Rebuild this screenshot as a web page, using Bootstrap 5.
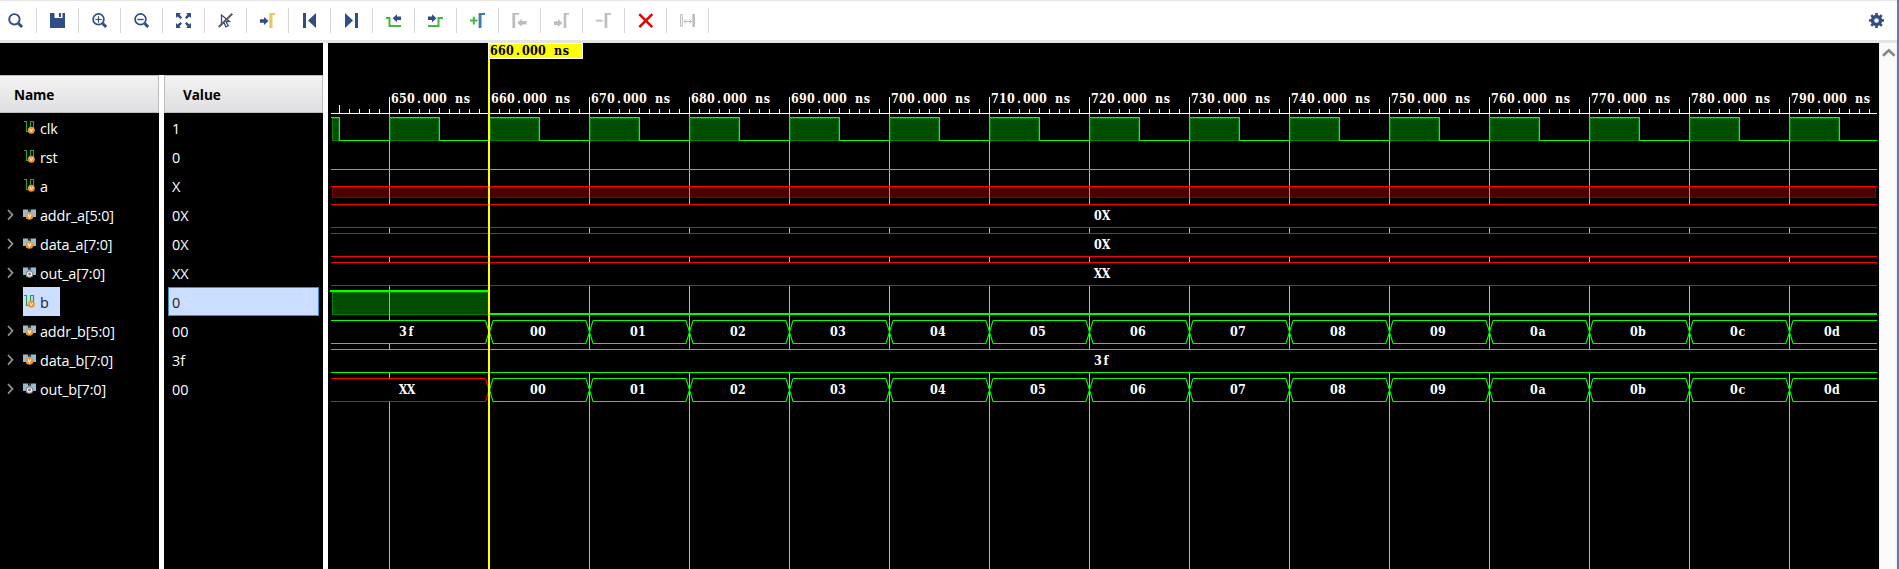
<!DOCTYPE html>
<html lang="en">
<head>
<meta charset="utf-8">
<meta name="viewport" content="width=device-width, initial-scale=1">
<title>Waveform viewer</title>
<link href="https://cdn.jsdelivr.net/npm/bootstrap@5.3.0/dist/css/bootstrap.min.css" rel="stylesheet">
<style>
  body { font-family: "Open Sans", "Noto Sans", sans-serif; font-size: 14.4px; line-height: 1; }
  .viewer { height: 569px; border-right: 2px solid #4a7fcb; }
  .toolbar { height: 43px; border-top: 1px solid #e5e5e5; border-bottom: 3px solid #e5e5e5; padding-top: 7px; }
  .tool { width: 42px; height: 25px; padding: 5px 0 4px 13px; border: 0; border-right: 1px solid #d6d6d6; background: none; }
  .tool:first-child { width: 37px; padding-left: 8px; }
  .tool svg, .gear svg { display: block; width: 16px; height: 16px; }
  .gear { border: 0; background: none; padding: 5px 12px 4px 0; height: 25px; }
  .side { width: 323px; padding-top: 32px; }
  .pane { width: 159px; background: #000; }
  .pane-head { height: 38px; border: 1px solid #bcbcbc; border-left: 0; background: linear-gradient(#f3f3f3, #dfdfe2); font: bold 13.6px/38px "Open Sans", sans-serif; color: #000; padding-left: 14px; }
  .pane-head span { display: inline-block; letter-spacing: -.1px; }
  .pane-value .pane-head { border-left: 1px solid #bcbcbc; padding-left: 18px; }
  .sig { height: 29px; color: #fff; padding-left: 6px; }
  .sig .chev { width: 17px; height: 29px; }
  .tag { height: 29px; padding-right: 10px; }
  .tag svg { width: 17px; height: 29px; }
  .tag.picked { background: #cbdeff; color: #222; padding-right: 11px; }
  .val { height: 29px; line-height: 31px; color: #fff; margin: 0 4px; padding-left: 4px; }
  .val.picked { background: #cbdeff; color: #222; border: 1px solid #3d8fd1; line-height: 29px; padding-left: 3px; }
  .tag span { line-height: 31px; letter-spacing: -.14px; white-space: nowrap; }
  .gutter { width: 5px; }
  .wave { width: 1551px; }
  .scroll { width: 18px; background: #fafafa; border-left: 1px solid #f0f0f0; border-right: 1px solid #f0f0f0; }
  .wave text { font-family: "DejaVu Serif Condensed", "DejaVu Serif", serif; font-stretch: semi-condensed; font-weight: bold; font-size: 12.4px; text-anchor: middle; }
</style>
</head>
<body class="bg-white overflow-hidden">
<svg class="d-none">
  <defs>
    <symbol id="wire" viewBox="0 0 17 29">
      <path d="M1 8.5h2.5v10H6M7.5 18V8.5h3V15" fill="none" stroke="#2f9a48" stroke-width="1.2"/>
      <circle cx="8.3" cy="17.3" r="3.5" fill="#f0922b"/><path d="M6.9 15.8l1.4 3 1.4-3" fill="none" stroke="#fff" stroke-width="1"/>
    </symbol>
    <symbol id="bus" viewBox="0 0 17 29">
      <path d="M0 9.500h5v2h3v-2h5v7.500H8v1.500H3V17H0z" fill="#94bdd3"/><path d="M5 9.500l3 3V9.500z" fill="#31536a"/>
      <circle cx="6.500" cy="16" r="3.800" fill="#f0922b"/><path d="M5 14.300l1.500 3.200L8 14.300" fill="none" stroke="#fff" stroke-width="1.100"/>
    </symbol>
    <symbol id="reg" viewBox="0 0 17 29">
      <path d="M0 9.500h5v2h3v-2h5v7.500H8v1.500H3V17H0z" fill="#94bdd3"/><path d="M5 9.500l3 3V9.500z" fill="#31536a"/>
      <circle cx="6.500" cy="16" r="3.800" fill="#8a8a8a"/><circle cx="6.500" cy="16" r="2" fill="#777" stroke="#fff" stroke-width="1.100"/>
    </symbol>
  </defs>
</svg>
<div class="viewer d-flex flex-column">
  <header class="toolbar d-flex align-items-start">
    <button class="tool" aria-label="Search"><svg viewBox="0 0 16 16" fill="none" stroke="#2f4d86"><circle cx="6.400" cy="6.300" r="5.200" stroke-width="1.900"/><path d="M10.500 10.500l3.600 3.500" stroke-width="2.900"/></svg></button>
    <button class="tool" aria-label="Save"><svg viewBox="0 0 16 16"><path d="M0 0h4.500v5h8V0H15v15H0z M9 0h2v4H9z" fill="#2f4d86"/></svg></button>
    <button class="tool" aria-label="Zoom in"><svg viewBox="0 0 16 16" fill="none" stroke="#2f4d86"><circle cx="6.500" cy="6.300" r="5.400" stroke-width="1.700"/><path d="M10.800 10.600l3.400 3.400" stroke-width="2.900"/><path d="M3.300 6.500h6.400M6.500 3.300v6.400" stroke-width="1.200"/></svg></button>
    <button class="tool" aria-label="Zoom out"><svg viewBox="0 0 16 16" fill="none" stroke="#2f4d86"><circle cx="6.500" cy="6.300" r="5.400" stroke-width="1.700"/><path d="M10.800 10.600l3.400 3.400" stroke-width="2.900"/><path d="M3.300 6.500h6.400" stroke-width="1.400"/></svg></button>
    <button class="tool" aria-label="Zoom fit"><svg viewBox="0 0 16 16"><path d="M0 0h5L3.500 1.500 6 4.500 4.500 6 1.500 3.500 0 5zM15 0v5l-1.500-1.500L10.500 6 9 4.500l2.500-3L10 0zM0 15v-5l1.500 1.500L4.500 9 6 10.500l-2.500 3L5 15zM15 15h-5l1.500-1.500-2.500-3L10.500 9l3 2.500L15 10z" fill="#2f4d86"/></svg></button>
    <button class="tool" aria-label="Select"><svg viewBox="0 0 16 16" fill="none"><path d="M3.500 2v9.500l2.400-2 2 4.300 2.200-1-1.900-4.100 3.300-.3z" stroke="#2f4d86" stroke-width="1.300"/><path d="M.7 14L14.300.7" stroke="#5c5c5c" stroke-width="2"/></svg></button>
    <button class="tool" aria-label="Go to cursor"><svg viewBox="0 0 16 16"><path d="M0 6.300h4V4l4.500 4L4 12V9.700H0z" fill="#2f4d86"/><path d="M9.300 15V0H15v2h-2.500v13z" fill="#e5c862"/></svg></button>
    <button class="tool" aria-label="First"><svg viewBox="0 0 16 16" fill="#2f4d86"><path d="M1 0h3v15H1zM14 0v15L6 7.500z"/></svg></button>
    <button class="tool" aria-label="Last"><svg viewBox="0 0 16 16" fill="#2f4d86"><path d="M11 0h3v15h-3zM1 0v15l8-7.500z"/></svg></button>
    <button class="tool" aria-label="Previous transition"><svg viewBox="0 0 16 16"><path d="M6.600 5.200L11 1.200v2.300h4v3.500h-4v2.300z" fill="#2f4d86"/><path d="M0 5h3.500v8H15" fill="none" stroke="#48b53f" stroke-width="2"/></svg></button>
    <button class="tool" aria-label="Next transition"><svg viewBox="0 0 16 16"><path d="M8.400 5.200L4 1.200v2.300H0v3.500h4v2.300z" fill="#2f4d86"/><path d="M0 13h10.500V5H15" fill="none" stroke="#48b53f" stroke-width="2"/></svg></button>
    <button class="tool" aria-label="Add marker"><svg viewBox="0 0 16 16"><path d="M0 7.500h7.500M3.800 3.700v7.700" stroke="#48b53f" stroke-width="2"/><path d="M8.600 15V0H15v2h-3.500v13z" fill="#3b7eaf"/></svg></button>
    <button class="tool" aria-label="Previous marker"><svg viewBox="0 0 16 16" fill="#bdbdbd"><path d="M.4 15V0H7v1.800H3.200V15zM5.200 9.700L9.700 5.700v2.200h4.800v3.700H9.700v2.200z"/></svg></button>
    <button class="tool" aria-label="Next marker"><svg viewBox="0 0 16 16" fill="#bdbdbd"><path d="M9.700 15V0H15v1.800h-2.700V15zM8.400 10L4 6v2.200H0v3.700h4V14z"/></svg></button>
    <button class="tool" aria-label="Remove marker"><svg viewBox="0 0 16 16" fill="#bdbdbd"><path d="M8.600 15V0H15v1.800h-3.700V15zM0 6.800h6.700v1.700H0z"/></svg></button>
    <button class="tool" aria-label="Delete"><svg viewBox="0 0 16 16"><path d="M1.300 1.200l13 13M14.300 1.200l-13 13" stroke="#e60000" stroke-width="2.500"/></svg></button>
    <button class="tool" aria-label="Swap cursors"><svg viewBox="0 0 16 16" fill="none" stroke="#bdbdbd"><path d="M.6 1.500h1.700v12H.6z" stroke-width="1"/><path d="M12.300 1h2.700v13h-2.700z" fill="#bdbdbd" stroke="none"/><path d="M4 8.500h7.500M6.200 6.300L4 8.500l2.200 2.200M9.300 6.300l2.200 2.200-2.200 2.200" stroke-width="1"/></svg></button>
    <button class="gear ms-auto" aria-label="Settings"><svg viewBox="0 0 16 16" fill="none" stroke="#2f4d86"><circle cx="7.500" cy="7.500" r="4" stroke-width="3.400"/><path d="M7.500 0v3M7.500 12v3M0 7.500h3M12 7.500h3M2.200 2.200l2 2M10.800 10.800l2 2M12.800 2.200l-2 2M4.200 10.800l-2 2" stroke-width="2.600"/></svg></button>
  </header>
  <main class="d-flex flex-grow-1">
    <section class="side d-flex bg-black">
      <div class="pane pane-name"><div class="pane-head"><span>Name</span></div><div id="names"></div></div>
      <div class="gutter bg-white"></div>
      <div class="pane pane-value"><div class="pane-head"><span>Value</span></div><div id="values"></div></div>
    </section>
    <div class="gutter bg-white"></div>
    <svg class="wave bg-black flex-shrink-0" height="526" viewBox="328 43 1551 526" id="wave"></svg>
    <aside class="scroll"><svg class="d-block" width="16" height="20" viewBox="0 0 16 20"><path d="M3 12.700l5.800-5.500 5.800 5.500" fill="none" stroke="#878787" stroke-width="2.600"/></svg></aside>
  </main>
</div>
<script src="https://cdn.jsdelivr.net/npm/bootstrap@5.3.0/dist/js/bootstrap.bundle.min.js"></script>
<script>
  const signals = [
    ['clk', '1', 'wire'], ['rst', '0', 'wire'], ['a', 'X', 'wire'],
    ['addr_a[5:0]', '0X', 'bus'], ['data_a[7:0]', '0X', 'bus'], ['out_a[7:0]', 'XX', 'reg'],
    ['b', '0', 'wire'], ['addr_b[5:0]', '00', 'bus'], ['data_b[7:0]', '3f', 'bus'], ['out_b[7:0]', '00', 'reg']
  ];
  let names = '', values = '';
  for (const [name, value, icon] of signals) {
    const picked = name === 'b' ? ' picked' : '';
    const chev = icon === 'wire' ? '' : '<path d="M2 10l4.500 4.800L2 19.600" fill="none" stroke="#949494" stroke-width="1.700"/>';
    names += `<div class="sig d-flex"><svg class="chev" viewBox="0 0 17 29">${chev}</svg><div class="tag d-flex${picked}"><svg><use href="#${icon}"/></svg><span>${name}</span></div></div>`;
    values += `<div class="val${picked}">${value}</div>`;
  }
  document.getElementById('names').innerHTML = names;
  document.getElementById('values').innerHTML = values;

  const L = 331, R = 1877, G = '#00ff00', RED = '#ff0000';
  let out = '';
  const box = (x, y, w, h, c, o = 1) => out += `<rect x="${x}" y="${y}" width="${w}" height="${h}" fill="${c}" fill-opacity="${o}"/>`;
  const label = (s, x, y, c = '#fff') => {
    const xs = [...s].map((_, i) => x + 4 + i * 8).join(' ');
    out += `<text x="${xs}" y="${y}" fill="${c}">${s}</text>`;
  };
  const shade = (x, y, w, h, c) => {
    box(x, y, w, h, c, .3);
    out += `<rect x="${x + .5}" y="${y + .5}" width="${w - 1}" height="${h - 1}" fill="none" stroke="${c}" stroke-opacity=".3"/>`;
  };
  // one bus segment; edges flagged true close with a slanted transition
  const segment = (x1, x2, y, c, s, e) => {
    const a = s ? x1 + 4 : L, b = e ? x2 - 3 : R, m = y + 12;
    out += `<path d="M${a} ${y}H${b}L${e ? x2 + .5 : b} ${m}L${b} ${y + 24}H${a}L${s ? x1 + .5 : a} ${m}Z" fill="#000"/>`;
    box(a, y, b - a, 1, c); box(a, y + 23, b - a, 1, c);
    if (s) out += `<path d="M${a} ${y + .5}L${x1 + .5} ${m}L${a} ${y + 23.5}" fill="none" stroke="${c}" stroke-width="1.100"/>`;
    if (e) out += `<path d="M${b} ${y + .5}L${x2 + .5} ${m}L${b} ${y + 23.5}" fill="none" stroke="${c}" stroke-width="1.100"/>`;
  };

  for (let x = 389; x < R; x += 100) box(x, 114, 1, 455, '#b4b4b4');
  box(L, 113, R - L, 1, '#fff');
  for (let x = 339, i = 5; x < R; x += 10, i++) {
    const top = i % 10 === 0 ? 97 : x === 339 ? 105 : i % 5 === 0 ? 108 : 109;
    box(x, top, 1, 113 - top, '#fff');
  }
  for (let k = 0; k < 15; k++) label(`${650 + k * 10}.000 ns`, 391 + k * 100, 103);

  // clk
  box(L, 117, 9, 1, G); shade(332, 118, 7, 23, G); box(339, 117, 1, 24, G); box(339, 140, 50, 1, G);
  for (let x = 389; x < R; x += 100) {
    box(x, 117, 51, 1, G); box(x, 117, 1, 24, G); box(x + 50, 117, 1, 24, G);
    shade(x + 1, 118, 49, 23, G);
    box(x + 50, 140, Math.min(50, R - x - 50), 1, G);
  }
  box(L, 169, R - L, 1, G);
  box(L, 186, R - L, 1, RED); shade(332, 187, 1544, 11, RED);
  [[204, '0X'], [233, '0X'], [262, 'XX']].forEach(([y, t]) => { segment(L, R, y, RED); label(t, 1094, y + 16); });
  // b
  box(330, 290, 158, 2, G); shade(332, 292, 157, 23, G); box(489, 313, R - 489, 2, G);
  // counters
  [[320, '3f', G], [378, 'XX', RED]].forEach(([y, t, c]) => {
    segment(L, 488.500, y, c, false, true);
    label(t, 399, y + 16);
    for (let k = 0; k < 14; k++) {
      const x = 489 + k * 100;
      segment(x, x + 100, y, G, true, k < 13);
      label(['00', '01', '02', '03', '04', '05', '06', '07', '08', '09', '0a', '0b', '0c', '0d'][k], k < 13 ? x + 41 : 1824, y + 16);
    }
  });
  segment(L, R, 349, G); label('3f', 1094, 365);
  // cursor
  box(488, 59, 2, 510, '#ffff00');
  box(488, 43, 95, 16, '#fff'); box(489, 44, 93, 14, '#ffff00'); label('660.000 ns', 490, 55, '#000');
  document.getElementById('wave').innerHTML = out;
</script>
</body>
</html>
